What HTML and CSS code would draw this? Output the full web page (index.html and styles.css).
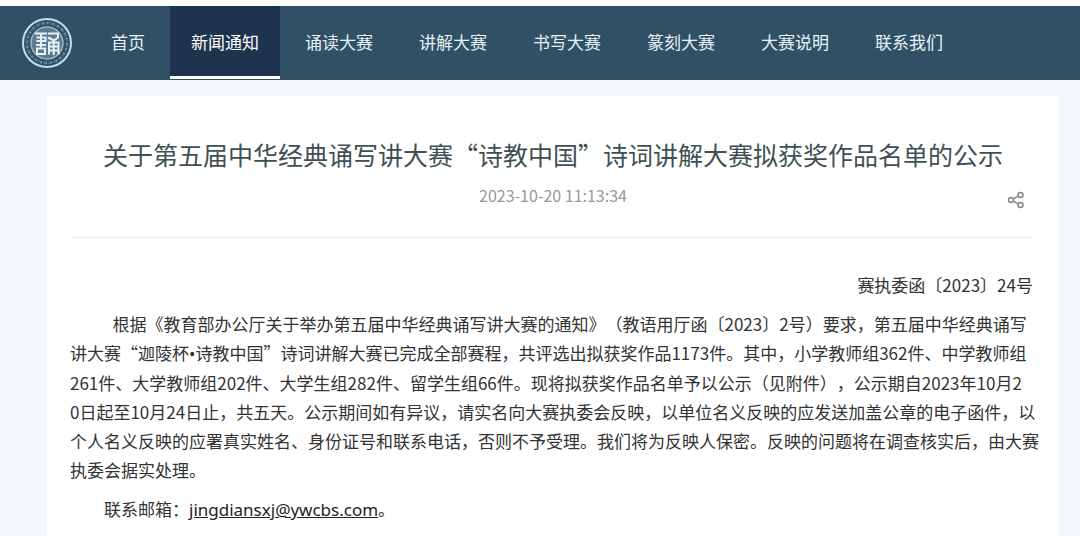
FILE: index.html
```
<!DOCTYPE html>
<html lang="zh-CN">
<head>
  <meta charset="UTF-8" />
  <meta name="viewport" content="width=device-width, initial-scale=1.0" />
  <title>关于第五届中华经典诵写讲大赛“诗教中国”诗词讲解大赛拟获奖作品名单的公示</title>
  <link rel="stylesheet" href="styles.css">
</head>
<body>
  <header class="site-header">
    <a class="logo" href="#" aria-label="首页">
      <svg width="52" height="52" viewBox="0 0 52 52" fill="none">
        <circle cx="26" cy="26" r="24" stroke="#c3dcee" stroke-width="2" />
        <circle cx="26" cy="26" r="20" stroke="#7f9bad" stroke-width="2.400" stroke-dasharray="1.600 1.100 .7 1.800" />
        <circle cx="26" cy="26" r="16" fill="#5d7b90" stroke="#9db6c6" stroke-width="1.500" />
        <!-- seal character -->
        <g stroke="#e6f2f9" stroke-width="2">
          <path d="M14 16.500h12M15.500 20.500h9v3.500h-9M20 16.500v14M15 28h10" />
          <path d="M16 31.500h8v5.500h-8z" />
          <path d="M27 16.500h10v4l-4 3M27 20.500l6 3M28 37.500v-12h9.500v12M28 29.500h9M28 33.500h9M32.700 24v14" />
        </g>
      </svg>
    </a>
    <nav class="nav">
      <a href="#">首页</a>
      <a href="#" class="active">新闻通知</a>
      <a href="#">诵读大赛</a>
      <a href="#">讲解大赛</a>
      <a href="#">书写大赛</a>
      <a href="#">篆刻大赛</a>
      <a href="#">大赛说明</a>
      <a href="#">联系我们</a>
    </nav>
  </header>

  <main class="article">
    <div class="article-head">
      <h1>关于第五届中华经典诵写讲大赛“诗教中国”诗词讲解大赛拟获奖作品名单的公示</h1>
      <time class="date">2023-10-20 11:13:34</time>
      <button class="share" type="button" aria-label="分享">
        <svg width="18" height="18" viewBox="0 0 18 18" fill="none" stroke="#858585" stroke-width="1.500">
          <circle cx="4" cy="9" r="2.500" />
          <circle cx="13.500" cy="4" r="2.500" />
          <circle cx="13.500" cy="14" r="2.500" />
          <path d="M6.300 7.900l5-2.700M6.300 10.200l5 2.600" />
        </svg>
      </button>
    </div>

    <div class="article-body">
      <p class="doc-no">赛执委函〔2023〕24号</p>
      <p class="lead">&ensp;根据《教育部办公厅关于举办第五届中华经典诵写讲大赛的通知》（教语用厅函〔2023〕2号）要求，第五届中华经典诵写<br>
        讲大赛“迦陵杯<span class="latin">•</span>诗教中国”诗词讲解大赛已完成全部赛程，共评选出拟获奖作品1173件。其中，小学教师组362件、中学教师组<br>
        261件、大学教师组202件、大学生组282件、留学生组66件。现将拟获奖作品名单予以公示（见附件），公示期自2023年10月2<br>
        0日起至10月24日止，共五天。公示期间如有异议，请实名向大赛执委会反映，以单位名义反映的应发送加盖公章的电子函件，以<br>
        个人名义反映的应署真实姓名、身份证号和联系电话，否则不予受理。我们将为反映人保密。反映的问题将在调查核实后，由大赛<br>
        执委会据实处理。</p>
      <p class="lead">联系邮箱：<a class="mail latin" href="mailto:jingdiansxj@ywcbs.com">jingdiansxj@ywcbs.com</a>。</p>
    </div>
  </main>
</body>
</html>
```
FILE: styles.css
```
body {
  margin: 0;
  padding-top: 6px;
  background: linear-gradient(#fdfefe 6px, #f3f8fc 6px);
  color: #333;
  font-family: "Noto Sans CJK SC", "Noto Sans", sans-serif;
  font-size: 17px;
  text-spacing-trim: space-all;
}
.site-header {
  display: flex;
  align-items: center;
  height: 74px;
  padding-left: 21px;
  background: #315066;
}
.logo {
  display: flex;
  margin-right: 17px;
}
.nav {
  display: flex;
  gap: 4px;
  height: 100%;
}
.nav a {
  box-sizing: border-box;
  padding: 0 21px;
  border-bottom: 3px solid transparent;
  line-height: 72px;
  height: 73px;
  color: #e6f3f5;
  text-decoration: none;
  white-space: nowrap;
}
.nav a.active {
  background: #1e334d;
  border-bottom-color: #fff;
  color: #fff;
}
.article {
  margin: 16px 22px 0 47px;
  padding: 38px 18px 12px 23px;
  background: #fff;
}
.article-head {
  position: relative;
  margin: 0 7px 0 3px;
  padding-bottom: 29px;
  border-bottom: 1px solid #ebebeb;
  text-align: center;
}
h1 {
  margin: 0;
  color: #3f5054;
  font-size: 25px;
  font-weight: 400;
  line-height: 40px;
}
.date {
  display: block;
  margin-top: 9px;
  color: #999;
  font-size: 16px;
  line-height: 25px;
}
.share {
  position: absolute;
  right: 8px;
  bottom: 28px;
  display: flex;
  padding: 0;
  border: none;
  background: none;
  cursor: pointer;
}
.article-body {
  padding-top: 32px;
  line-height: 29px;
}
.article-body p {
  margin: 0 0 10px;
}
.article-body .doc-no {
  margin-right: 7px;
  text-align: right;
}
.lead {
  text-indent: 2em;
}
.latin {
  font-family: "Noto Sans", sans-serif;
}
.mail {
  color: #222;
}
```
